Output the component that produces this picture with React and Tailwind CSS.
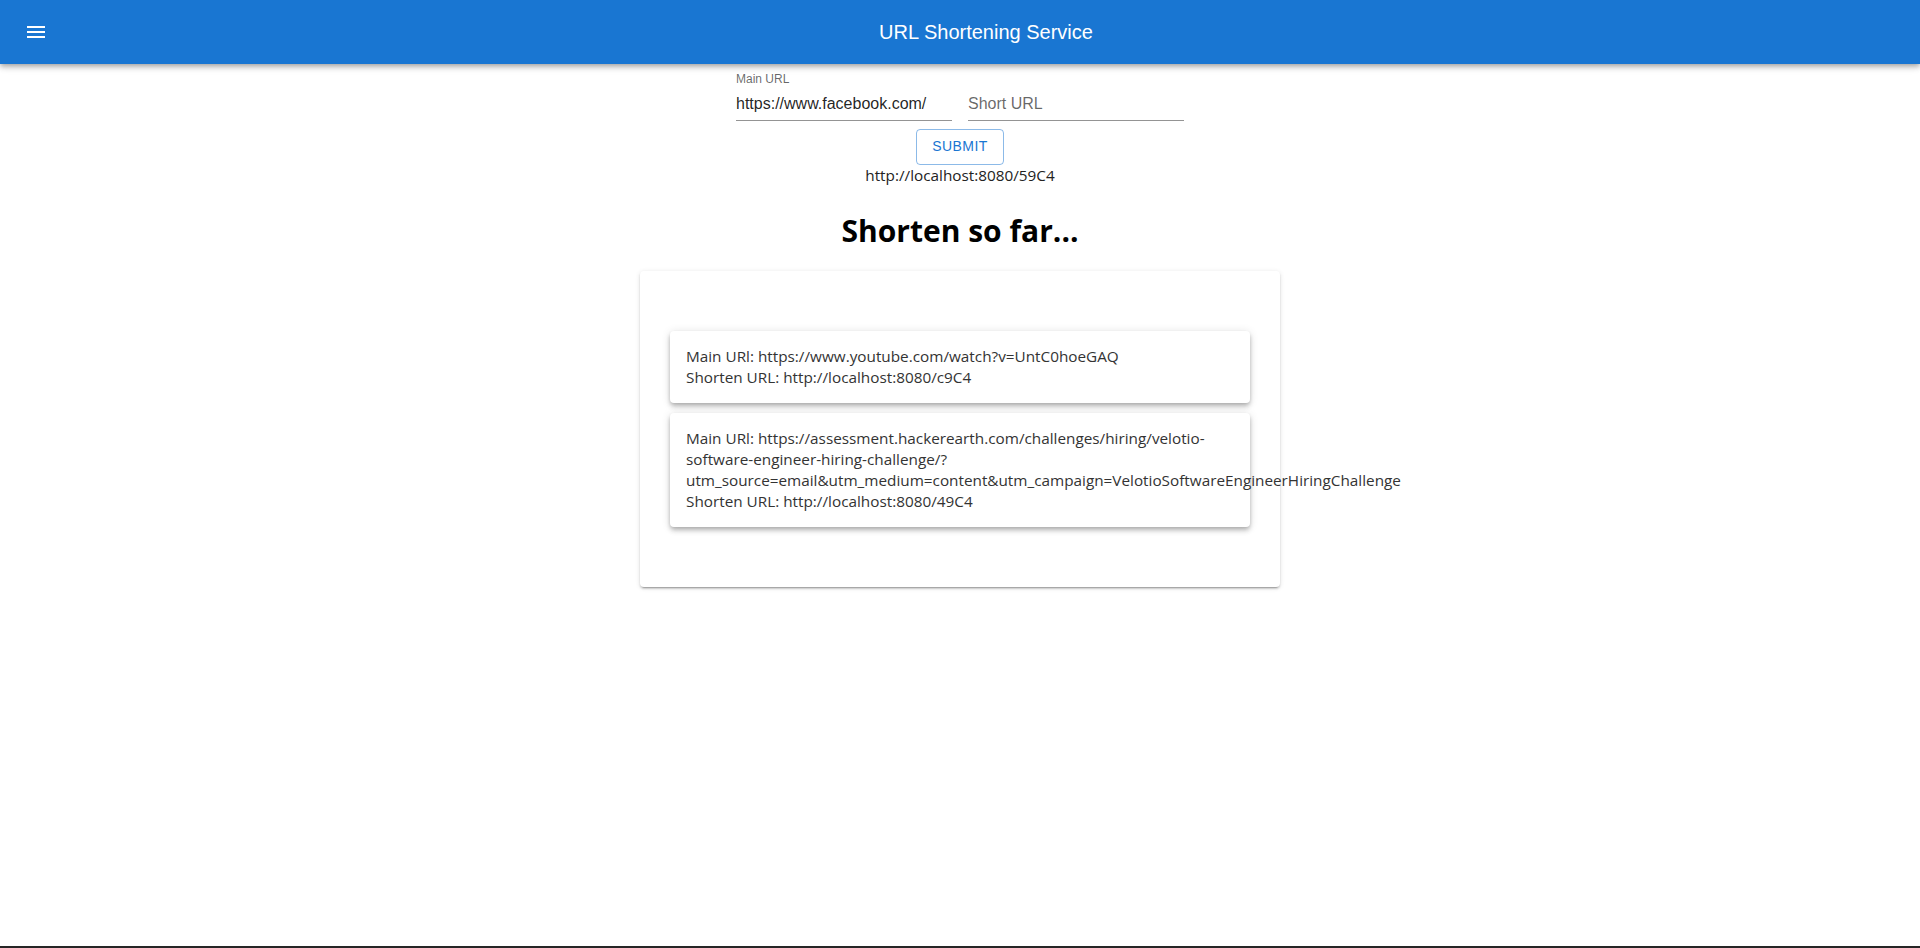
import React, { useState } from "react";

const shortened = [
  {
    id: 1,
    lines: ["Main URl: https://www.youtube.com/watch?v=UntC0hoeGAQ"],
    short: "http://localhost:8080/c9C4",
  },
  {
    id: 2,
    lines: [
      "Main URl: https://assessment.hackerearth.com/challenges/hiring/velotio-",
      "software-engineer-hiring-challenge/?",
      "utm_source=email&utm_medium=content&utm_campaign=VelotioSoftwareEngineerHiringChallenge",
    ],
    short: "http://localhost:8080/49C4",
  },
];

const ui = "font-['Open_Sans','Noto_Sans',sans-serif]";

export default function App() {
  const [mainUrl, setMainUrl] = useState("https://www.facebook.com/");
  const [shortUrl, setShortUrl] = useState("");

  return (
    <div className="min-h-screen bg-white font-['Liberation_Sans',Arial,sans-serif]">
      <header className="relative z-10 flex h-16 items-center bg-[#1976d2] px-6 text-white shadow-[0px_2px_4px_-1px_rgba(0,0,0,0.2),0px_4px_5px_0px_rgba(0,0,0,0.14),0px_1px_10px_0px_rgba(0,0,0,0.12)]">
        <button className="-ml-3 mr-4 flex h-12 w-12 items-center justify-center rounded-full">
          <svg viewBox="0 0 24 24" className="h-6 w-6 fill-white">
            <path d="M3 18h18v-2H3v2zm0-5h18v-2H3v2zm0-7v2h18V6H3z" />
          </svg>
        </button>
        <h6 className="flex-1 text-center text-[20px] leading-[32px] font-normal">URL Shortening Service</h6>
      </header>

      <main className="flex flex-col items-center">
        <form className="flex flex-col items-center" onSubmit={(e) => e.preventDefault()}>
          <div className="flex">
            <div className="relative m-2 w-[216px]">
              <label className="absolute left-0 top-[-1.5px] text-[12px] leading-[17px] text-black/60">Main URL</label>
              <div className="mt-4 border-b border-black/[0.42]">
                <input
                  value={mainUrl}
                  onChange={(e) => setMainUrl(e.target.value)}
                  className="h-[32px] w-full bg-transparent pt-[4px] pb-[5px] text-[16px] leading-[23px] text-black/[0.87] outline-none"
                />
              </div>
            </div>
            <div className="relative m-2 w-[216px]">
              <div className="mt-4 border-b border-black/[0.42]">
                <input
                  value={shortUrl}
                  placeholder="Short URL"
                  onChange={(e) => setShortUrl(e.target.value)}
                  className="h-[32px] w-full bg-transparent pt-[4px] pb-[5px] text-[16px] leading-[23px] text-black/[0.87] outline-none placeholder:text-black/60"
                />
              </div>
            </div>
          </div>
          <button
            type="submit"
            className="h-9 w-[88px] rounded border border-[#1976d2]/50 pb-px text-[14px] font-medium uppercase tracking-[0.4px] text-[#1976d2]"
          >
            Submit
          </button>
        </form>

        <p className={`${ui} text-[15.3px] leading-[21px] text-[#222]`}>http://localhost:8080/59C4</p>

        <h1 className={`${ui} mt-[23px] mb-[19px] text-[30px] leading-[43px] font-bold text-black`}>Shorten so far...</h1>

        <div className="flex w-[640px] flex-col gap-[10px] rounded bg-white px-[30px] py-[60px] shadow-[0px_3px_1px_-2px_rgba(0,0,0,0.2),0px_2px_2px_0px_rgba(0,0,0,0.14),0px_1px_5px_0px_rgba(0,0,0,0.12)]">
          {shortened.map((item) => (
            <div
              key={item.id}
              className={`${ui} rounded bg-white px-4 py-[15px] text-[15.3px] leading-[21px] text-[#333] shadow-[0px_2px_4px_-1px_rgba(0,0,0,0.2),0px_4px_5px_0px_rgba(0,0,0,0.14),0px_1px_10px_0px_rgba(0,0,0,0.12)]`}
            >
              {item.lines.map((line, i) => (
                <div key={i} className="whitespace-nowrap">{line}</div>
              ))}
              <div className="whitespace-nowrap">Shorten URL: {item.short}</div>
            </div>
          ))}
        </div>
      </main>

      <div className="fixed inset-x-0 bottom-0 h-[2px] bg-[#262626]" />
    </div>
  );
}
